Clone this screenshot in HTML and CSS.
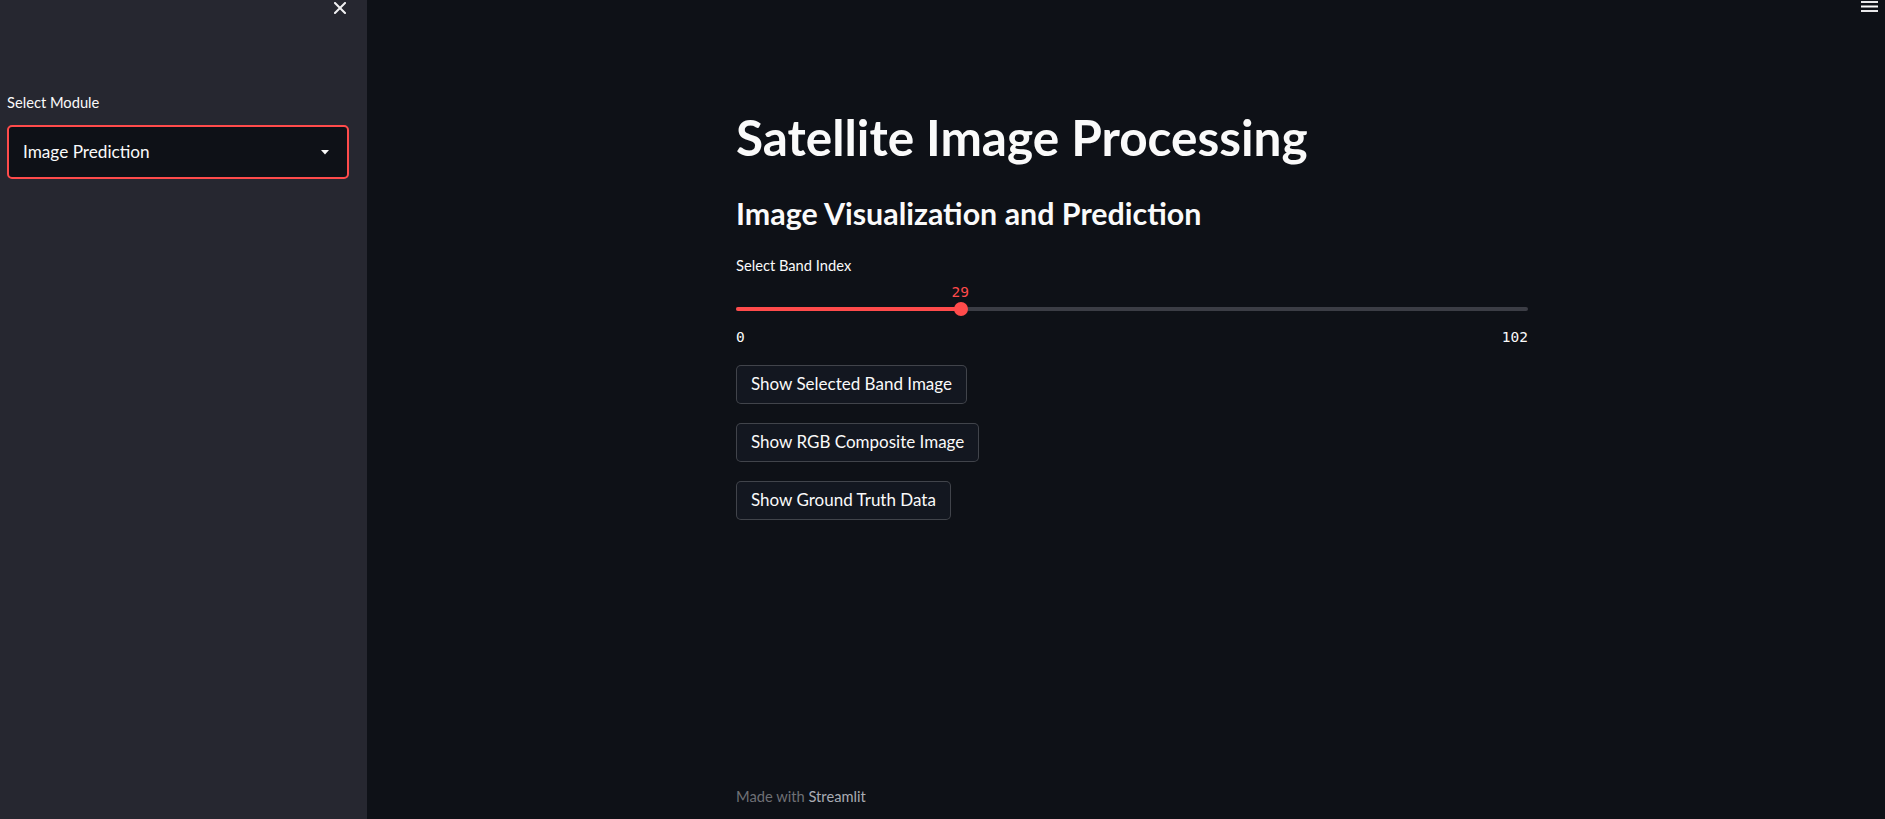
FILE: index.html
```html
<!DOCTYPE html>
<html lang="en">
<head>
<meta charset="utf-8">
<title>Satellite Image Processing</title>
<link rel="stylesheet" href="styles.css">
</head>
<body>
<div class="app">
  <aside class="sidebar">
    <div class="sidebar-head">
      <button class="icon-btn close-btn" aria-label="Close sidebar">
        <svg width="12" height="12" viewBox="0 0 12 12"><path d="M1 1 L11 11 M11 1 L1 11" stroke="#f0f0f2" stroke-width="2" stroke-linecap="square" fill="none"/></svg>
      </button>
    </div>
    <div class="sidebar-body">
      <label class="widget-label">Select Module</label>
      <div class="select">
        <span class="select-value">Image Prediction</span>
        <svg class="select-arrow" width="8" height="5" viewBox="0 0 8 5"><path d="M0 0 H8 L4 4.5 Z" fill="#fafafa"/></svg>
      </div>
    </div>
  </aside>
  <main class="main">
    <div class="topbar">
      <svg class="hamburger" width="17" height="13" viewBox="0 0 17 13"><rect x="0" y="1" width="17" height="2" fill="#e8e8ea"/><rect x="0" y="5.5" width="17" height="2" fill="#fafafa"/><rect x="0" y="10" width="17" height="2" fill="#e8e8ea"/></svg>
    </div>
    <div class="block">
      <h1 class="title">Satellite Image Processing</h1>
      <h2 class="subtitle">Image Visualization and Prediction</h2>
      <div class="slider-widget">
        <label class="widget-label">Select Band Index</label>
        <div class="slider-value-row">
          <span class="slider-value" style="left:28.43%">29</span>
        </div>
        <div class="slider-track-area">
          <div class="slider-track">
            <div class="slider-fill" style="width:28.43%"></div>
            <div class="slider-thumb" style="left:28.43%"></div>
          </div>
        </div>
        <div class="slider-minmax">
          <span>0</span>
          <span>102</span>
        </div>
      </div>
      <div class="buttons">
        <button class="st-btn">Show Selected Band Image</button>
        <button class="st-btn">Show RGB Composite Image</button>
        <button class="st-btn">Show Ground Truth Data</button>
      </div>
    </div>
    <footer class="footer">Made with <span class="footer-link">Streamlit</span></footer>
  </main>
</div>
</body>
</html>
```
FILE: styles.css
```css
html, body {
  margin: 0;
  padding: 0;
  height: 100%;
  overflow: hidden;
  background: #0e1117;
}

body {
  font-family: "Lato", "Liberation Sans", sans-serif;
  color: #fafafa;
}

.app {
  display: flex;
  height: 100vh;
}

/* ---------- sidebar ---------- */
.sidebar {
  width: 367px;
  flex: 0 0 367px;
  background: #262730;
  display: flex;
  flex-direction: column;
}

.sidebar-head {
  display: flex;
  justify-content: flex-end;
  padding: 2px 21px 0 0;
  height: 12px;
}

.icon-btn {
  border: none;
  background: none;
  padding: 0;
  margin: 0;
  display: flex;
  cursor: pointer;
}

.sidebar-body {
  padding: 80px 18px 0 7px;
  display: flex;
  flex-direction: column;
}

.widget-label {
  display: block;
  font-size: 14.7px;
  line-height: 17.5px;
  color: #fafafa;
}

.select {
  margin-top: 13px;
  height: 54px;
  box-sizing: border-box;
  border: 2px solid #ff4b4b;
  border-radius: 5px;
  background: #0e1117;
  display: flex;
  align-items: center;
  justify-content: space-between;
  padding: 0 18px 0 14px;
}

.select-value {
  font-size: 17.2px;
  line-height: 20.6px;
  color: #fafafa;
  padding-top: 1px;
}

.select-arrow {
  display: block;
  margin-top: 1px;
}

/* ---------- main ---------- */
.main {
  flex: 1 1 auto;
  display: flex;
  flex-direction: column;
  padding-left: 12px;
  min-width: 0;
}

.topbar {
  display: flex;
  justify-content: flex-end;
  padding-right: 7px;
  height: 13px;
}

.hamburger {
  display: block;
}

.block {
  width: 792px;
  margin: 0 auto;
  display: flex;
  flex-direction: column;
}

.title {
  margin: 95px 0 0 0;
  font-size: 49.5px;
  line-height: 59.4px;
  font-weight: 700;
  color: #fafafa;
}

.subtitle {
  margin: 27.6px 0 0 0;
  font-size: 30.4px;
  line-height: 36.5px;
  font-weight: 700;
  color: #fafafa;
}

.slider-widget {
  margin-top: 25px;
  display: flex;
  flex-direction: column;
}

.slider-value-row {
  position: relative;
  height: 17px;
  margin-top: 9.6px;
}

.slider-value {
  position: absolute;
  top: 0;
  transform: translateX(-50%);
  font-family: "DejaVu Sans Mono", "Liberation Mono", monospace;
  font-size: 14.5px;
  line-height: 17px;
  color: #ff4b4b;
  margin-left: -1px;
}

.slider-track-area {
  height: 14px;
  margin-top: 1px;
  display: flex;
  align-items: center;
}

.slider-track {
  position: relative;
  width: 100%;
  height: 4px;
  border-radius: 2px;
  background: #3b3d45;
}

.slider-fill {
  height: 100%;
  border-radius: 2px;
  background: #ff4b4b;
}

.slider-thumb {
  position: absolute;
  top: 50%;
  width: 14px;
  height: 14px;
  border-radius: 50%;
  background: #ff4b4b;
  transform: translate(-50%, -50%);
}

.slider-minmax {
  margin-top: 13px;
  display: flex;
  justify-content: space-between;
  font-family: "DejaVu Sans Mono", "Liberation Mono", monospace;
  font-size: 14.5px;
  line-height: 17px;
  color: #fafafa;
}

.buttons {
  margin-top: 19px;
  display: flex;
  flex-direction: column;
  align-items: flex-start;
  gap: 18.5px;
}

.st-btn {
  height: 39.5px;
  box-sizing: border-box;
  padding: 0 14px;
  border: 1px solid rgba(250, 250, 250, 0.2);
  border-radius: 5px;
  background: #131720;
  color: #fafafa;
  font-family: "Lato", "Liberation Sans", sans-serif;
  font-size: 17px;
  line-height: 20.6px;
  cursor: pointer;
}

.footer {
  margin-top: auto;
  width: 792px;
  margin-left: auto;
  margin-right: auto;
  padding-bottom: 13px;
  font-size: 14.7px;
  line-height: 17.6px;
  color: #6e7075;
}

.footer-link {
  color: #a9acb4;
}
```
